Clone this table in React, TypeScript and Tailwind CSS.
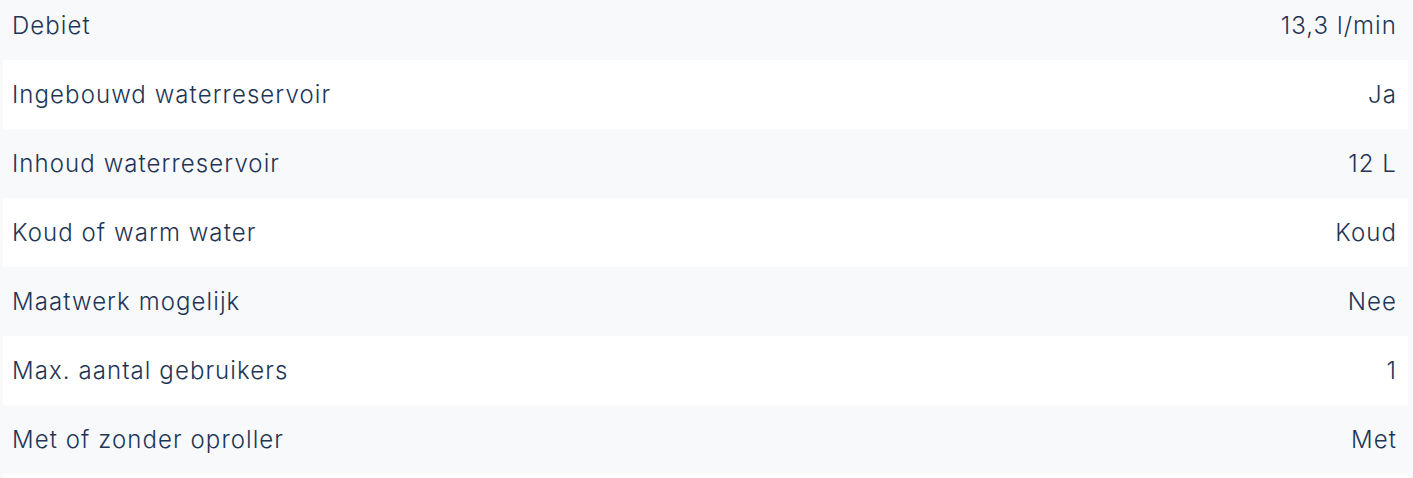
const specs = [
  ["Debiet", "13,3 l/min"],
  ["Ingebouwd waterreservoir", "Ja"],
  ["Inhoud waterreservoir", "12 L"],
  ["Koud of warm water", "Koud"],
  ["Maatwerk mogelijk", "Nee"],
  ["Max. aantal gebruikers", "1"],
  ["Met of zonder oproller", "Met"],
];

export default function App() {
  return (
    <div className="w-full h-[478px] overflow-hidden bg-[#f8f9fb] pl-[3px] pr-[5px] font-['Inter',sans-serif] text-[24px] font-[350] tracking-[0.045em] text-[#1e3556]">
      <div className="-mt-[9px] flex flex-col">
        {specs.map(([label, value], i) => (
          <div
            key={label}
            className={`flex h-[69px] items-center justify-between pl-[9px] pr-[11px] ${i % 2 === 1 ? "bg-white" : "bg-[#f8f9fb]"}`}
          >
            <span>{label}</span>
            <span>{value}</span>
          </div>
        ))}
        <div className="h-[69px] bg-white" />
      </div>
    </div>
  );
}
